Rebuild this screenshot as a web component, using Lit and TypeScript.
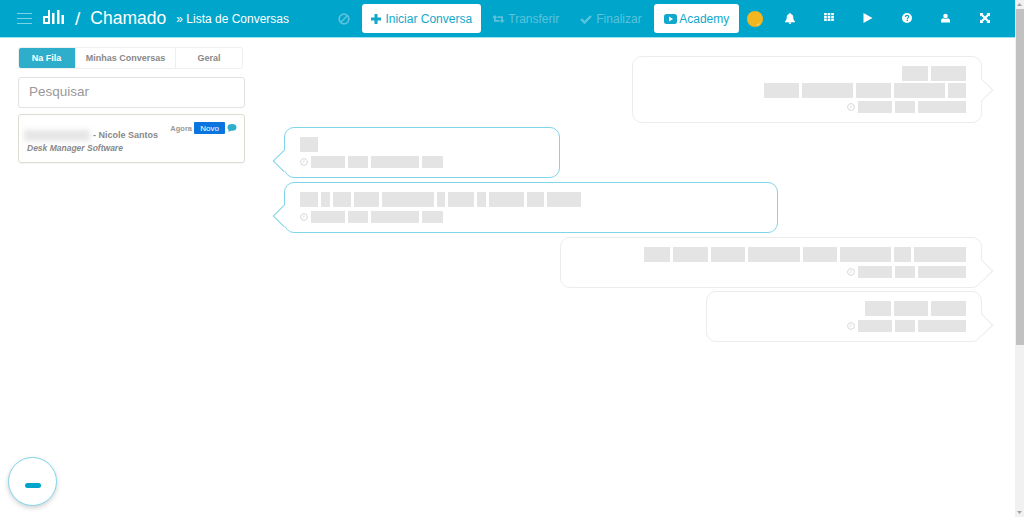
import { LitElement, html, css, svg } from "lit";
import { customElement } from "lit/decorators.js";

type Bubble = { side: "in" | "out"; width: number; lines: number[][]; meta: number[] };

const META_OUT = [34, 20, 48];
const META_IN = [34, 20, 48, 21];

const BUBBLES: Bubble[] = [
  { side: "out", width: 350, lines: [[26, 35], [35, 51, 35, 51, 18]], meta: META_OUT },
  { side: "in", width: 276, lines: [[18]], meta: META_IN },
  { side: "in", width: 494, lines: [[18, 9, 18, 25, 52, 8, 26, 9, 35, 17, 34]], meta: META_IN },
  { side: "out", width: 422, lines: [[26, 35, 34, 52, 34, 51, 17, 52]], meta: META_OUT },
  { side: "out", width: 276, lines: [[26, 34, 35]], meta: META_OUT },
];

const icon = (w: number, h: number, vb: string, body: unknown) => html`<svg width=${w} height=${h} viewBox=${vb} aria-hidden="true">${body}</svg>`;

@customElement("app-root")
export class AppRoot extends LitElement {
  static styles = css`
    :host { display: block; position: relative; height: 517px; overflow: hidden; background: #fff; font-family: "Liberation Sans", Arial, sans-serif; color: #777; }
    .top { height: 37px; width: 1015px; background: #00a5cb; border-bottom: 1px solid #9be3f2; display: flex; align-items: center; color: #fff; box-sizing: content-box; }
    .menu { margin-left: 17px; width: 15px; height: 11px; display: flex; flex-direction: column; justify-content: space-between; }
    .menu i { display: block; height: 1px; background: #7fd2e5; }
    .logo { margin-left: 11px; margin-bottom: 3px; display: flex; }
    .slash { margin-left: 11px; font-size: 19px; }
    .title { margin-left: 10px; font-size: 17.5px; width: 86px; }
    .crumb { font-size: 12px; width: 162px; }
    .ban { width: 24px; display: flex; }
    .btn { height: 29px; border-radius: 3px; background: #fff; color: #12a8cc; display: flex; align-items: center; justify-content: center; font-size: 12px; box-sizing: border-box; }
    .start { width: 119px; gap: 4px; }
    .ghost { color: #5cc3dc; font-size: 12px; display: flex; align-items: center; }
    .transfer { margin-left: 11px; width: 88px; gap: 3px; }
    .finish { width: 74px; gap: 4px; }
    .academy { width: 85px; gap: 2px; }
    .dot { margin-left: 8px; margin-right: 7px; display: flex; }
    .tools { display: flex; }
    .tools span { width: 39px; display: flex; justify-content: center; }
    .body { display: flex; align-items: flex-start; padding-left: 18px; width: 1015px; box-sizing: border-box; }
    .side { width: 227px; padding-top: 9px; flex: none; }
    .tabs { width: 225px; height: 22px; display: grid; grid-template-columns: 56px 100px 67px; border: 1px solid #efefef; border-radius: 3px; box-sizing: border-box; overflow: hidden; font-size: 9px; font-weight: bold; color: #888; }
    .tabs div { display: flex; align-items: center; justify-content: center; border-left: 1px solid #efefef; margin-top: -1px; margin-bottom: -1px; }
    .tabs div:first-child { background: #2eaecb; color: #fff; border-left: none; margin-left: -1px; border-radius: 3px 0 0 3px; }
    .search { margin-top: 8px; height: 31px; border: 1px solid #e2e2e2; border-radius: 3px; box-sizing: border-box; display: flex; align-items: center; padding: 0 0 2px 10px; font-size: 13.5px; color: #999; }
    .card { margin-top: 6px; height: 49px; border: 1px solid #dedbd2; border-radius: 3px; box-sizing: border-box; box-shadow: 0 1px 1px rgba(0,0,0,.04); padding: 7px 7px 0 8px; }
    .flags { display: flex; justify-content: flex-end; align-items: center; gap: 2px; height: 12px; font-size: 7.5px; font-weight: bold; color: #999; }
    .badge { width: 31px; height: 12px; border-radius: 1px; background: #0b74de; color: #fff; font-size: 8px; font-weight: normal; display: flex; align-items: center; justify-content: center; }
    .who { display: flex; align-items: center; margin-top: -6px; height: 14px; font-size: 9px; font-weight: bold; color: #888; gap: 3px; }
    .blur { width: 66px; height: 11px; margin-left: -3px; background: #e6e6e6; filter: blur(2.5px); }
    .co { margin-top: 1px; font-size: 8.5px; font-style: italic; font-weight: bold; color: #888; }
    .chat { flex: 1; min-width: 0; padding: 18px 33px 0 39px; display: flex; flex-direction: column; gap: 4px; box-sizing: border-box; }
    .bubble { position: relative; box-sizing: border-box; border: 1px solid #ececec; border-radius: 10px; background: #fff; padding: 9px 15px; display: flex; flex-direction: column; gap: 2px; }
    .bubble:last-child { margin-top: -1px; }
    .bubble.out { align-self: flex-end; align-items: flex-end; }
    .bubble.in { align-self: flex-start; border-color: #7fd5ea; }
    .bubble::after { content: ""; position: absolute; top: 25px; width: 16px; height: 16px; background: #fff; border: 1px solid #ececec; transform: rotate(45deg); box-sizing: border-box; }
    .bubble.out::after { right: -9px; border-width: 1px 1px 0 0; }
    .bubble.in::after { left: -9px; border-width: 0 0 1px 1px; border-color: #7fd5ea; }
    .line { display: flex; gap: 3px; height: 15px; }
    .line i { display: block; background: #e4e4e4; height: 15px; }
    .meta { display: flex; gap: 3px; align-items: center; height: 12px; margin-top: 2px; }
    .line + .line + .meta { margin-top: 1px; }
    .meta i { display: block; background: #e4e4e4; height: 12px; }
    .scroll { position: absolute; top: 0; right: 0; bottom: 0; width: 9px; background: #f1f1f1; }
    .thumb { position: absolute; top: 9px; left: 1px; right: 0; height: 336px; background: #c1c1c1; }
    .arrow { position: absolute; left: 2px; display: flex; }
    .arrow.up { top: 3px; }
    .arrow.down { bottom: 3px; }
    .fab { position: absolute; left: 8px; top: 457px; width: 49px; height: 49px; border-radius: 50%; border: 1px solid #7fd5ea; background: #fff; box-sizing: border-box; box-shadow: 0 2px 5px rgba(0,0,0,.18); display: flex; align-items: center; justify-content: center; }
    .fab i { display: block; width: 16px; height: 5px; border-radius: 2.5px; background: #00a5cb; margin-top: 8px; }
  `;

  private clock() {
    return icon(8, 8, "0 0 8 8", svg`<circle cx="4" cy="4" r="3.4" fill="none" stroke="#d8d8d8"/><path d="M4 2v2.2L2.600 5" fill="none" stroke="#d8d8d8" stroke-width=".7"/>`);
  }

  private bubble(b: Bubble) {
    return html`<div class="bubble ${b.side}" style="width:${b.width}px">
      ${b.lines.map((l) => html`<div class="line">${l.map((w) => html`<i style="width:${w}px"></i>`)}</div>`)}
      <div class="meta">${this.clock()}${b.meta.map((w) => html`<i style="width:${w}px"></i>`)}</div>
    </div>`;
  }

  render() {
    return html`
      <header class="top">
        <div class="menu"><i></i><i></i><i></i></div>
        <div class="logo">${icon(21, 14, "0 0 21 14", svg`<path d="M0 6h7v8H0zM5 0h2v7H5zM9 3h2.500v11H9zM14 0h2.500v14H14zM18.500 5H21v9h-2.500z" fill="#fff"/><rect x="2" y="8" width="3" height="4" fill="#00a5cb"/>`)}</div>
        <span class="slash">/</span>
        <span class="title">Chamado</span>
        <span class="crumb">» Lista de Conversas</span>
        <span class="ban">${icon(12, 12, "0 0 12 12", svg`<circle cx="6" cy="6" r="4.8" fill="none" stroke="#5cc3dc" stroke-width="1.800"/><path d="M2.800 9.200l6.400-6.400" stroke="#5cc3dc" stroke-width="1.600"/>`)}</span>
        <div class="btn start">${icon(10, 10, "0 0 10 10", svg`<path d="M3.500 0h3v3.500H10v3H6.500V10h-3V6.500H0v-3h3.500z" fill="#12a8cc"/>`)}<span>Iniciar Conversa</span></div>
        <div class="ghost transfer">${icon(13, 10, "0 0 14 11", svg`<path d="M3 3v4.500h5M11 8V3.500H6" fill="none" stroke="#5cc3dc" stroke-width="2"/><path d="M0 4l3-3 3 3zM8 7l3 3 3-3z" fill="#5cc3dc"/>`)}<span>Transferir</span></div>
        <div class="ghost finish">${icon(12, 10, "0 0 12 10", svg`<path d="M1 5l3.500 3.500L11 2" fill="none" stroke="#5cc3dc" stroke-width="2.400"/>`)}<span>Finalizar</span></div>
        <div class="btn academy">${icon(13, 10, "0 0 13 10", svg`<rect width="13" height="10" rx="2.500" fill="#12a8cc"/><path d="M5 2.500v5L9 5z" fill="#fff"/>`)}<span>Academy</span></div>
        <div class="dot">${icon(16, 16, "0 0 16 16", svg`<circle cx="8" cy="8" r="8" fill="#f4b61f"/><path d="M10 13.500l1 1 1.500-2" fill="none" stroke="#f6e6b8" stroke-width=".8"/>`)}</div>
        <div class="tools">
          <span>${icon(10, 11, "0 0 11 12", svg`<path d="M5.500 0a1 1 0 0 1 1 1c2 .5 2.600 2 2.600 4 0 2.400.9 3.400 1.900 4.400V10H0v-.6C1 8.400 1.900 7.400 1.900 5c0-2 .6-3.500 2.600-4a1 1 0 0 1 1-1zM4 10.500h3A1.500 1.500 0 0 1 4 10.500z" fill="#fff"/>`)}</span>
          <span>${icon(10, 8, "0 0 11 9", svg`<path d="M0 0h3v2.500H0zM4 0h3v2.500H4zM8 0h3v2.500H8zM0 3.300h3v2.500H0zM4 3.300h3v2.500H4zM8 3.300h3v2.500H8zM0 6.500h3V9H0zM4 6.500h3V9H4zM8 6.500h3V9H8z" fill="#fff"/>`)}</span>
          <span>${icon(10, 10, "0 0 9 10", svg`<path d="M0 0l9 5-9 5z" fill="#fff"/>`)}</span>
          <span>${icon(10, 10, "0 0 10 10", svg`<circle cx="5" cy="5" r="5" fill="#fff"/><path d="M3.400 3.900c0-2 3.300-2 3.300-.1 0 1.100-1.300 1.100-1.300 2.100" fill="none" stroke="#00a5cb" stroke-width="1.200"/><rect x="4.600" y="6.700" width="1.400" height="1.400" fill="#00a5cb"/>`)}</span>
          <span>${icon(9, 10, "0 0 10 10", svg`<circle cx="5" cy="2.800" r="2.500" fill="#fff"/><path d="M0 10V7.500C0 6 1.500 5.500 2.500 5.200c1.500 1 3.500 1 5 0C8.500 5.500 10 6 10 7.500V10z" fill="#fff"/>`)}</span>
          <span>${icon(10, 10, "0 0 10 10", svg`<path d="M0 0h3.500L2.500 1l2.500 2.500L7.500 1l-1-1H10v3.500l-1-1L6.500 5 9 7.500l1-1V10H6.500l1-1L5 6.500 2.500 9l1 1H0V6.500l1 1L3.500 5 1 2.500l-1 1z" fill="#fff"/>`)}</span>
        </div>
      </header>
      <div class="body">
        <aside class="side">
          <div class="tabs"><div>Na Fila</div><div>Minhas Conversas</div><div>Geral</div></div>
          <div class="search">Pesquisar</div>
          <div class="card">
            <div class="flags">
              <span>Agora</span><span class="badge">Novo</span>
              ${icon(10, 8, "0 0 10 9", svg`<ellipse cx="5" cy="3.800" rx="5" ry="3.700" fill="#2eaecb"/><path d="M1.500 5.500L1 9l3.500-2z" fill="#2eaecb"/>`)}
            </div>
            <div class="who"><div class="blur"></div><span>- Nicole Santos</span></div>
            <div class="co">Desk Manager Software</div>
          </div>
        </aside>
        <main class="chat">${BUBBLES.map((b) => this.bubble(b))}</main>
      </div>
      <div class="fab"><i></i></div>
      <div class="scroll">
        <div class="arrow up">${icon(5, 3, "0 0 5 3", svg`<path d="M0 3l2.500-3L5 3z" fill="#a3a3a3"/>`)}</div>
        <div class="thumb"></div>
        <div class="arrow down">${icon(5, 3, "0 0 5 3", svg`<path d="M0 0l2.500 3L5 0z" fill="#a3a3a3"/>`)}</div>
      </div>
    `;
  }
}
